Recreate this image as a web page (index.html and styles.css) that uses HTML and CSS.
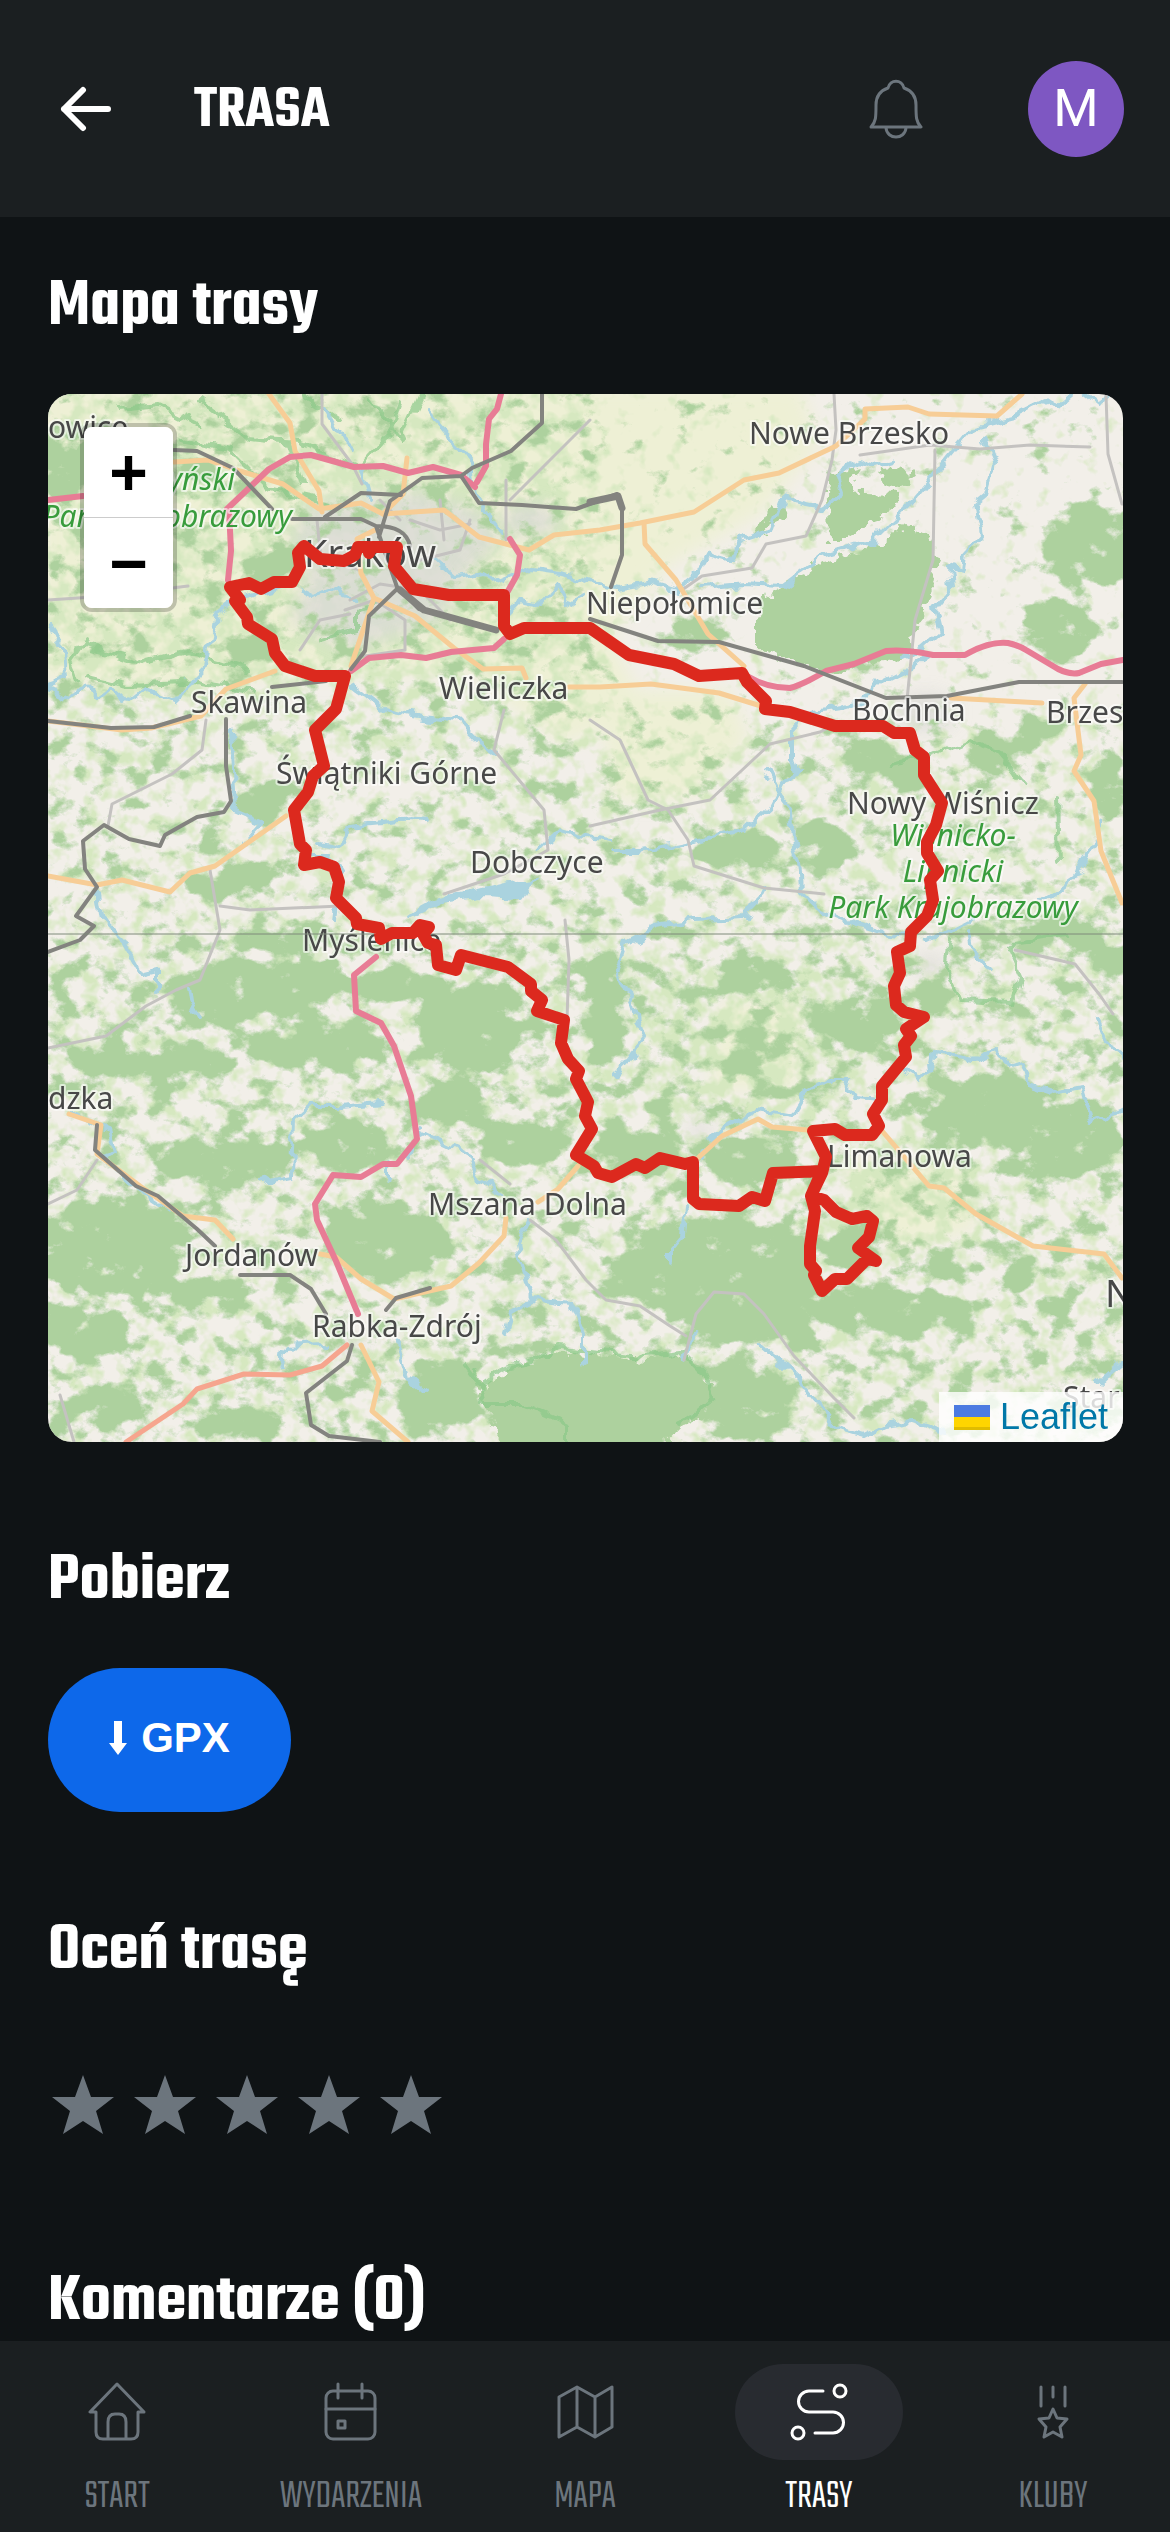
FILE: index.html
```html
<!DOCTYPE html>
<html lang="pl">
<head>
    <meta charset="UTF-8">
    <meta name="viewport" content="width=device-width, initial-scale=1">
    <title>Trasa</title>
    <link rel="stylesheet" href="styles.css">
</head>
<body>
    <header class="topbar">
        <a href="#" class="back" aria-label="Wstecz">
            <svg width="52" height="52" viewBox="0 0 52 52"><path d="M48 26H4M23 7L4 26l19 19"/></svg>
        </a>
        <h1>TRASA</h1>
        <button class="bell" aria-label="Powiadomienia">
            <svg width="54" height="60" viewBox="0 0 54 60"><path d="M2 48c5-5 5-10 5-22C7 16 13 11 19 9c2-9 14-9 16 0 6 2 12 7 12 17 0 12 0 17 5 22zM17 49c1 12 19 12 20 0"/></svg>
        </button>
        <button class="avatar">M</button>
    </header>

    <main>
        <section>
            <h2>Mapa trasy</h2>
            <div class="map">
                <svg class="tiles" viewBox="48 394 1075 1048" preserveAspectRatio="xMidYMid slice">
                    <defs>
                        <!-- density painted in alpha + noise, then thresholded -->
                        <filter id="forest" x="0" y="380" width="1180" height="1080" filterUnits="userSpaceOnUse" color-interpolation-filters="sRGB">
                            <feGaussianBlur in="SourceAlpha" stdDeviation="6" result="d"/>
                            <feTurbulence type="fractalNoise" baseFrequency="0.04 0.05" numOctaves="5" seed="7"/>
                            <feColorMatrix values="0 0 0 0 0  0 0 0 0 0  0 0 0 0 0  1 0 0 0 0" result="n"/>
                            <feComposite in="n" in2="d" operator="arithmetic" k2="1" k3="0.6"/>
                            <feComponentTransfer result="m"><feFuncA type="linear" slope="6" intercept="-4"/></feComponentTransfer>
                            <feFlood flood-color="#add19e"/>
                            <feComposite in2="m" operator="in"/>
                        </filter>
                        <filter id="scrub" x="0" y="380" width="1180" height="1080" filterUnits="userSpaceOnUse" color-interpolation-filters="sRGB">
                            <feGaussianBlur in="SourceAlpha" stdDeviation="20" result="d"/>
                            <feTurbulence type="fractalNoise" baseFrequency="0.06" numOctaves="3" seed="21"/>
                            <feColorMatrix values="0 0 0 0 0  0 0 0 0 0  0 0 0 0 0  1 0 0 0 0" result="n"/>
                            <feComposite in="n" in2="d" operator="arithmetic" k2="1" k3="0.4"/>
                            <feComponentTransfer result="m"><feFuncA type="linear" slope="4" intercept="-2.4"/></feComponentTransfer>
                            <feFlood flood-color="#d6e8c0"/>
                            <feComposite in2="m" operator="in"/>
                        </filter>
                        <filter id="soft" x="0" y="380" width="1180" height="1080" filterUnits="userSpaceOnUse"><feGaussianBlur stdDeviation="9"/></filter>
                        <filter id="rough" x="0" y="380" width="1180" height="1080" filterUnits="userSpaceOnUse">
                            <feTurbulence type="fractalNoise" baseFrequency="0.09" numOctaves="3" seed="3"/>
                            <feDisplacementMap in="SourceGraphic" scale="20" xChannelSelector="R" yChannelSelector="G"/>
                        </filter>
                        <filter id="wobble" x="0" y="380" width="1180" height="1080" filterUnits="userSpaceOnUse" color-interpolation-filters="sRGB">
                            <feTurbulence type="fractalNoise" baseFrequency="0.06" numOctaves="2" seed="11"/>
                            <feDisplacementMap in="SourceGraphic" scale="16" xChannelSelector="R" yChannelSelector="G"/>
                        </filter>
                    </defs>
                    <rect x="48" y="394" width="1075" height="1048" fill="#f2efe9"/>

                    <g class="farmland" filter="url(#soft)">
                        <path d="M40 385H800l20 60-60 70-90 50-60 70 40 80-90 30-90-70H300L190 690 40 680z"/>
                        <path d="M600 690h130l20 50-60 60h-80zM720 1000h80v90h-90zM840 1160h120l20 70-90 20z"/>
                    </g>
                    <g filter="url(#scrub)">
                        <rect x="40" y="385" width="560" height="330" opacity=".6"/>
                        <rect x="40" y="720" width="1085" height="725" opacity=".35"/>
                        <rect x="640" y="980" width="200" height="130" opacity=".6"/>
                        <rect x="820" y="1150" width="150" height="70" opacity=".6"/>
                    </g>
                    <g class="urban" filter="url(#soft)">
                        <path d="M310 505l110-14 60 20 20 30-30 30-30 50-90 30-60-30 20-50-20-30z"/>
                        <ellipse cx="530" cy="520" rx="30" ry="16"/>
                        <ellipse cx="925" cy="712" rx="30" ry="18"/>
                        <ellipse cx="930" cy="965" rx="16" ry="10"/>
                        <ellipse cx="700" cy="1130" rx="12" ry="8"/>
                        <ellipse cx="350" cy="1345" rx="14" ry="8"/>
                    </g>

                    <g filter="url(#forest)">
                        <rect x="40" y="385" width="560" height="330" opacity=".22"/>
                        <rect x="600" y="385" width="525" height="330" opacity=".04"/>
                        <rect x="40" y="715" width="1085" height="210" opacity=".2"/>
                        <rect x="40" y="925" width="1085" height="520" opacity=".27"/>
                        <g opacity=".85">
                            <ellipse cx="62" cy="465" rx="34" ry="28"/><ellipse cx="272" cy="564" rx="26" ry="20"/>
                            <ellipse cx="263" cy="800" rx="30" ry="20"/><ellipse cx="250" cy="650" rx="26" ry="12"/>
                            <ellipse cx="230" cy="880" rx="40" ry="16"/><ellipse cx="195" cy="470" rx="30" ry="10"/>
                            <ellipse cx="1095" cy="545" rx="52" ry="42"/><ellipse cx="1058" cy="630" rx="36" ry="32"/>
                            <ellipse cx="695" cy="633" rx="34" ry="14"/><ellipse cx="868" cy="755" rx="34" ry="14"/>
                            <ellipse cx="905" cy="778" rx="22" ry="18"/><ellipse cx="990" cy="750" rx="28" ry="14"/>
                            <ellipse cx="735" cy="850" rx="44" ry="18"/><ellipse cx="822" cy="845" rx="30" ry="24"/>
                            <ellipse cx="1030" cy="730" rx="20" ry="14"/><ellipse cx="1110" cy="790" rx="16" ry="30"/>
                            <ellipse cx="1050" cy="932" rx="64" ry="14"/><ellipse cx="1110" cy="958" rx="30" ry="14"/>
                            <ellipse cx="290" cy="938" rx="60" ry="11"/><ellipse cx="260" cy="985" rx="96" ry="22"/>
                            <ellipse cx="215" cy="1006" rx="42" ry="18"/><ellipse cx="395" cy="985" rx="46" ry="16"/>
                            <ellipse cx="470" cy="1030" rx="52" ry="46"/><ellipse cx="315" cy="1045" rx="68" ry="24"/>
                            <ellipse cx="150" cy="1062" rx="92" ry="13"/><ellipse cx="225" cy="1160" rx="64" ry="20"/>
                            <ellipse cx="345" cy="1145" rx="42" ry="24"/><ellipse cx="110" cy="1245" rx="78" ry="44"/>
                            <ellipse cx="390" cy="1240" rx="60" ry="38"/><ellipse cx="455" cy="1105" rx="38" ry="20"/>
                            <ellipse cx="525" cy="1145" rx="44" ry="20"/><ellipse cx="85" cy="1330" rx="44" ry="26"/>
                            <ellipse cx="105" cy="1407" rx="46" ry="14"/><ellipse cx="195" cy="1290" rx="40" ry="12"/>
                            <ellipse cx="705" cy="1265" rx="88" ry="46"/><ellipse cx="735" cy="1310" rx="66" ry="32"/>
                            <ellipse cx="745" cy="1160" rx="44" ry="22"/><ellipse cx="640" cy="1150" rx="42" ry="22"/>
                            <ellipse cx="858" cy="1025" rx="40" ry="26"/><ellipse cx="750" cy="1050" rx="24" ry="18"/>
                            <ellipse cx="925" cy="995" rx="28" ry="12"/><ellipse cx="603" cy="1010" rx="18" ry="64"/>
                            <ellipse cx="750" cy="975" rx="30" ry="18"/><ellipse cx="985" cy="1110" rx="64" ry="34"/>
                            <ellipse cx="1070" cy="1140" rx="52" ry="34"/><ellipse cx="852" cy="1250" rx="26" ry="22"/>
                            <ellipse cx="890" cy="1312" rx="76" ry="20"/><ellipse cx="797" cy="1290" rx="22" ry="62"/>
                            <ellipse cx="750" cy="1400" rx="42" ry="40"/><ellipse cx="1022" cy="1272" rx="14" ry="18"/>
                            <ellipse cx="947" cy="1267" rx="12" ry="10"/><ellipse cx="1062" cy="1305" rx="14" ry="10"/>
                            <ellipse cx="440" cy="1395" rx="40" ry="34"/><ellipse cx="240" cy="1420" rx="40" ry="14"/>
                        </g>
                    </g>
                    <g class="woods" filter="url(#rough)">
                        <path d="M764 597l29-18 21-14 29-8 36-10 21-20 28 7 10 22-9 43-16 38-5 20-34 5-29 10-36-4-53-21v-28z"/>
                        <path d="M828 492l72 2-5 14-50 34h-16zM825 474l30-4-6 22-20 2zM753 535l14-2 18-24-10-6z"/>
                        <ellipse cx="895" cy="476" rx="17" ry="9"/>
                        <path d="M470 1369l17 20 18-20 30-8 16-10 44 4 52 5 40-4 20 20 10 23-20 20-14 6-26 27H505l-18-42z"/>
                    </g>
                    <g class="park-edge" filter="url(#wobble)">
                        <path d="M464 1364l17 22 24-18 30-8 24-12 40 4 45 4 38-4 22 22 10 24-22 18-12 8"/>
                        <path d="M476 1370l6 34h40l44 20v18M890 765l30-5 34-14 14-6 30 12 28 34M1058 800l2 60M950 940l-4 30 14 30 52 2 8-26-14-32 60-8"/>
                        <path d="M84 645l28 8 30 10 44-12 60 18M80 680l-8-20 14-20M88 676l40 10 70-4 60 10M180 440l50 10 40 40 60 14M260 440l40 2 60 24 30-34 10-30M200 400l50 40 40 4 12 40M120 410l40-4 40 20M320 640l36-10 0-20 26-6M370 400l30 40 20-44M300 394l40 26"/>
                    </g>

                    <g class="water" filter="url(#wobble)">
                        <path d="M410 917q30-22 60-24 40-10 62-12l-10 16-40-2-40 6z" class="lake"/>
                        <path d="M48 625l16 24 2 30-18 6M48 688l20 10 16-12 12 12 14-10 16 14 18-14 30 12 30-30 8-30 4-24 26-20 40-10"/>
                        <path d="M300 589l12 6 20-6 20 8M436 560l18 16 30-4 20 10 28-12 32 4 26 8 30 6 30-6 26 8 22-18 10-18 22 6 12-20 30-10 10-30 40 8 20-14-6-20 20-14 20 6 14-4"/>
                        <path d="M701 588l42-4 40 2 40-30 50-16 40-40 22-26 24-30 16-18 40-10 32-16 12 8 20-18 20 16 16-26 16 4M500 620l20-20 20 4 16-20 10 20 16-10"/>
                        <path d="M985 440l10 24-8 30-12 10 6 32-16 18-2 16-14-4 2 22-16 20 6 24-20 18-16 8M928 655l-14 10-12 6-20 10-20 20-20 6-30 4-18 20v24l4 18-16 10-12 24-24 22-40 10-30 6-34 6-30 0"/>
                        <path d="M765 770l10 20 16 20 2 30 6 20 2 30 20 20 34 14 26 8 34 4M697 920l50-2 14-30M697 920l-40 6-30 16-10 30 16 34 10 34-16 22-12 12"/>
                        <path d="M353 685l30 24 40 8 36 4 16 16 20 16M318 843l20 4 12-22 60-6 18 2M310 856h20l10 16-6 50M231 730l4 80 28 12-20 22M98 895l4 24 20 20 20 36 16-4v20M190 988l2 14 8 16M540 850l20-20 20 6 30 4"/>
                        <path d="M380 1102l-40 4-30 0-16 14-2 56-30 6M419 1128l-12 30M389 1165v18M418 1132l50 24 12 24 24 14M530 1220l-12 24 8 40 6 16-22 12-6 20M532 1300l40 4 12 30v30"/>
                        <path d="M69 1114l40 16 6 24-14 4 40 34 30 20M400 1345l8 30 20 18M326 1344l-40 2-4 24M1042 900l30-20 20-30 10-30M970 920l-40 20M970 930l4 26 18 12"/>
                        <path d="M699 1157l20-26 40-22 34 6 14-24 20-10h18l10 16 26 2M904 1070l16 10 14-16 2-12 40 8 20-8 14 14 12-4 6 22 24 8 30-4 10 34 32-14M686 1205l-4 30-12 14v14"/>
                        <path d="M1098 1020l10 24 14 10M684 1360l12-26M760 1345l40 36 36 46 28 8 20-10 30-4 30 10M1098 1382l24-20M325 409l14 24 14 14M425 409l30 34 16 20 4 30 28 40M362 470l8 30"/>
                    </g>
                    <g class="minor">
                        <path d="M48 600l60-4 80-10M206 720l-4 30-30 24-60 30-4 22M220 906l30 4 90-4M210 870l10 60-20 50-24 10-30 16-40 30-58 12M322 394v30l30 40 10 20M590 420l-40 40-40 40"/>
                        <path d="M504 710l-10 40 50 60 4 40-44 24-60 20M834 394l2 36-4 30-10 40-16 36-40 8-14 24-50 8-20 14M935 450l-2 110-18 60-8 80M1106 394l2 60 14 50M860 455l70-10 50 4 50-4 60 2M590 826l70-16 50-10 60-56 50-12 16-8M590 720l30 20 28 60 20 10 20 30 6 26 70 22 60 6"/>
                        <path d="M565 920l4 40-2 60M350 600l30-16 40 6 30 30M420 560l40-10 10-30M1015 950l60 14 24 30 14 20M97 1160l-20 30-29 14M530 1220l26 20 30 40 20 20 34 6 30 20 16 10M684 1360l12-46 18-22 30 2 20 20 30 42 40 42 20 20M480 1160l30 24M60 1395l14 47"/>
                        <path d="M317 520l4 40 40 10M345 610l30-10 30 20v30l-40 6M300 650l20-30 30-6M410 520l30 10 30-6M440 500l4 40M380 500l20 20M506 480v60"/>
                    </g>
                    <g class="orange">
                        <path d="M269 394l21 29 5 28 24 40 3 21M174 462l34-2 32 11 43 13 36 25 42-6 22 11 61-4 35 27 50 13 25-15 46-5 40-7 54-11 50-32 35-7 57-27 29-27v-10l43-2 21 7 68 2 25-22"/>
                        <path d="M644 523l1 21 31 36 32 54 36 32M383 514l20-20 4-36M361 573l13 25 41 18 39 32 29 21 39-1 4 10M569 687h31l51-3 68 9 42 13M374 598l-23 68M361 573l-4-34 20-10"/>
                        <path d="M275 671l-49 18-25 27-50 12-29 2-74-9M48 876l49 9 25-5 48 12 20-19 25-7 71-50M951 698l91 5M1085 684l-11 14 7 57-7 16 20 30 7 50 21 52"/>
                        <path d="M69 1114l32 11-4 29 43 32 43 30 32 4 18 19M320 1254l16 3 25 22 33 20 57-13 28-23 25-27 2-18M538 1202l20-13 20-23M361 1345l18 37-7 29 36 31M699 1157l23-21 36-17 14 8 36 3M883 1132l46 54 15 2 32 26 57 32 71 8 18 24"/>
                    </g>
                    <path class="salmon" d="M347 1345l-25 21-32 9-46-1-47 15-14 15-57 38"/>
                    <g class="motorway">
                        <path d="M48 500l35-4M227 509l42-40 21-12 21-2 43 12 29-1 25 7 25-6 28 8 14 12M501 394l-4 15-8 10-3 25v22l-9 16M229 509l2 42-3 29M510 539l10 16-3 20-9 16M504 639l-10 9-43 4-25 6-25-3-32 3-18 13"/>
                        <path d="M747 676q20 12 43 12 14-4 36-17l28-7 32-13q20-2 47 4h32q24-14 43-12 10 2 18 7l32 19q12 6 21 4l22-9 22-4M376 957l-22 18 2 36 25 12 13 23 17 50 6 43-20 25h-14l-22 13-28-2-18 29 2 16 19 41 22 53"/>
                    </g>
                    <g class="rail">
                        <path d="M174 450l23 1 36 17 39 41M292 519h69l15 7 21 61 22 22 78 21M542 394v29l-31 28-39 17-11 8-39 2-32 23-11 36M325 517l36-24 40 2M461 476l18 27 43 2 54 4 41-15 5 11v50l-11 32M376 526q30 0 34 20"/>
                        <path d="M590 619l68 22 61 1 85 24 82 32 61-2 72-14h103M397 589l-28 27-4 35-14 18M272 687l54-6M48 721l63 7 43-1 36-11M226 719v47l5 35-7 11-27 5-32 18-5 11-31-7-25-14-21 16 2 28 12 18-21 29 18 10-14 14-32 12"/>
                        <path d="M97 1125l-2 25 41 36 22 10 39 33 18 17M240 1275h50l21 14 15 25M386 1310l10-12 34-10M352 1345l-5 16-41 32 5 32 18 11 51 6"/>
                        <path class="yard" d="M400 590l24 20 72 20M590 502l28-6 4 12"/>
                    </g>

                    <g class="labels">
                        <text x="48" y="438">owice</text>
                        <text x="749" y="444">Nowe Brzesko</text>
                        <text x="586" y="614">Niepołomice</text>
                        <text x="439" y="699">Wieliczka</text>
                        <text x="191" y="713">Skawina</text>
                        <text x="276" y="784">Świątniki Górne</text>
                        <text x="470" y="873">Dobczyce</text>
                        <text x="852" y="721">Bochnia</text>
                        <text x="1046" y="723">Brzes</text>
                        <text x="847" y="814">Nowy Wiśnicz</text>
                        <text x="302" y="951">Myślenice</text>
                        <text x="48" y="1109">dzka</text>
                        <text x="428" y="1215">Mszana Dolna</text>
                        <text x="827" y="1167">Limanowa</text>
                        <text x="185" y="1266">Jordanów</text>
                        <text x="312" y="1337">Rabka-Zdrój</text>
                        <text x="1063" y="1408">Star</text>
                        <text x="304" y="567" class="city">Kraków</text>
                        <text x="1105" y="1307" class="city">N</text>
                        <text x="235" y="490" class="park" text-anchor="end">Tenczyński</text>
                        <text x="292" y="527" class="park" text-anchor="end">Park Krajobrazowy</text>
                        <text x="953" y="846" class="park" text-anchor="middle">Wiśnicko-</text>
                        <text x="953" y="882" class="park" text-anchor="middle">Lipnicki</text>
                        <text x="953" y="918" class="park" text-anchor="middle">Park Krajobrazowy</text>
                    </g>
                    <path class="seam" d="M48 934h1075"/>

                    <path class="route" d="M397 547L394 566 413 589 449 595H504V626L510 634 524 628H590L629 655 674 664 699 676 742 673 747 682 766 701 765 709 790 712 835 726H883L894 733H910L915 750 924 757V775L942 803 936 825 927 842V853L938 871 930 880 933 900 927 916 911 932 910 946 897 952 900 973 894 986 896 1005 904 1012 924 1017 906 1029 911 1036 904 1045 906 1057 882 1086V1100L873 1114 879 1126 872 1135H845L835 1129 813 1131 826 1157 822 1173 811 1196 824 1200 836 1212 852 1219 867 1216 873 1221 869 1237 858 1248 876 1261 867 1259 847 1279H835L822 1291 814 1275 816 1271 810 1264V1246L815 1211 811 1196 822 1171 773 1173 765 1201 752 1197 739 1206 699 1204 693 1199V1162L685 1164 660 1158 645 1168 636 1164 612 1177 598 1173 594 1166 576 1155 592 1129 585 1116 588 1102 576 1079 579 1071 568 1059 561 1043 564 1020 537 1011 542 1000 531 991V984L508 967 461 955 456 970 438 965 436 945 428 943 423 934 429 927 420 925 413 933H392L381 939 379 928 357 924 356 918 336 898 339 882 334 867 320 862 304 865 306 850 300 844 294 810 308 792 313 776 324 766 315 730 336 709 345 676H315L285 666 275 653 272 639 248 624 247 617 235 601 240 600 230 587 249 583 261 589 274 582H292L300 567 298 553 304 546 320 559 344 561 355 555 358 547H368L369 553 372 547Z"/>
                </svg>
                <div class="zoom">
                    <button aria-label="Przybliż">+</button>
                    <button aria-label="Oddal">−</button>
                </div>
                <div class="attribution">
                    <svg width="36" height="25" viewBox="0 0 36 25"><path fill="#4c7be1" d="M0 0h36v12H0z"/><path fill="#ffd500" d="M0 12h36v10H0z"/><path fill="#e0bc00" d="M0 22h36v3H0z"/></svg>
                    <a href="#">Leaflet</a>
                </div>
            </div>
        </section>

        <section>
            <h2>Pobierz</h2>
            <button class="gpx">
                <svg width="18" height="34" viewBox="0 0 18 34"><path d="M5 0h8v22h5L9 34 0 22h5z"/></svg>
                GPX
            </button>
        </section>

        <section>
            <h2>Oceń trasę</h2>
            <div class="rating">
                <button aria-label="1"><svg viewBox="0 0 66 66"><path d="M33 3l8 22h23L46 39l7 23-20-13-20 13 7-23L2 25h23z"/></svg></button>
                <button aria-label="2"><svg viewBox="0 0 66 66"><path d="M33 3l8 22h23L46 39l7 23-20-13-20 13 7-23L2 25h23z"/></svg></button>
                <button aria-label="3"><svg viewBox="0 0 66 66"><path d="M33 3l8 22h23L46 39l7 23-20-13-20 13 7-23L2 25h23z"/></svg></button>
                <button aria-label="4"><svg viewBox="0 0 66 66"><path d="M33 3l8 22h23L46 39l7 23-20-13-20 13 7-23L2 25h23z"/></svg></button>
                <button aria-label="5"><svg viewBox="0 0 66 66"><path d="M33 3l8 22h23L46 39l7 23-20-13-20 13 7-23L2 25h23z"/></svg></button>
            </div>
        </section>

        <section>
            <h2>Komentarze (0)</h2>
        </section>
    </main>

    <nav class="tabs">
        <a href="#">
            <span class="icon"><svg viewBox="0 0 60 60"><path d="M30 2L3 30h6v20q0 7 7 7h28q7 0 7-7V30h6zM21 57V40q0-8 7-8h4q7 0 7 8v17"/></svg></span>
            START
        </a>
        <a href="#">
            <span class="icon"><svg viewBox="0 0 60 60"><rect x="5" y="9" width="49" height="48" rx="7"/><path d="M5 27h49M17 2v14M41 2v14"/><rect x="17" y="39" width="7" height="7"/></svg></span>
            WYDARZENIA
        </a>
        <a href="#">
            <span class="icon"><svg viewBox="0 0 60 60"><path d="M4 15L22 5l18 10L57 5v40L40 55 22 45 4 55zM22 5v40M40 15v40"/></svg></span>
            MAPA
        </a>
        <a href="#" class="active">
            <span class="icon"><svg viewBox="0 0 60 60"><circle cx="51" cy="9" r="6"/><circle cx="9" cy="51" r="6"/><path d="M34 9H20a10 10 0 0 0 0 21h24a10 10 0 0 1 0 21H26"/></svg></span>
            TRASY
        </a>
        <a href="#">
            <span class="icon"><svg viewBox="0 0 60 60"><path d="M18 5v19M30 5v10M42 5v19M30 27l4 9 10 1-7 8 2 10-9-5-9 5 2-10-7-8 10-1z"/></svg></span>
            KLUBY
        </a>
    </nav>
</body>
</html>
```
FILE: styles.css
```css
* {
    box-sizing: border-box;
}
body {
    display: flex;
    flex-direction: column;
    min-height: 100vh;
    margin: 0;
    background-color: #0f1315;
    color: #fff;
    font-family: Teko, "Roboto Condensed", Roboto, sans-serif;
}
h1, h2 {
    margin: 0;
    font-weight: 600;
}
button {
    padding: 0;
    border: none;
    background: none;
    color: inherit;
    cursor: pointer;
}
a {
    text-decoration: none;
}
svg {
    display: block;
}
.topbar {
    display: flex;
    align-items: center;
    height: 217px;
    padding: 0 46px 0 60px;
    background-color: #1b1f21;
}
.topbar h1 {
    margin-left: 82px;
    padding-top: 7px;
    font-size: 60px;
    line-height: 72px;
}
.back svg {
    fill: none;
    stroke: #fff;
    stroke-width: 6;
    stroke-linecap: round;
    stroke-linejoin: round;
}
.bell {
    margin-left: auto;
    margin-right: 105px;
}
.bell svg {
    fill: none;
    stroke: #6c757d;
    stroke-width: 3;
    stroke-linejoin: round;
}
.avatar {
    width: 96px;
    height: 96px;
    border-radius: 50%;
    background-color: #7e57c2;
    font-family: Roboto, sans-serif;
    font-size: 52px;
}
main {
    flex: 1;
    display: flex;
    flex-direction: column;
    gap: 104px;
    padding: 55px 47px 2px 48px;
}
h2 {
    margin-bottom: 50px;
    font-size: 69px;
    line-height: 72px;
}
section:last-child h2 {
    margin-bottom: 0;
}

/* map */
.map {
    position: relative;
    height: 1048px;
    border-radius: 24px;
    overflow: hidden;
}
.tiles {
    width: 100%;
    height: 100%;
}
.farmland {
    fill: #eef0d5;
}
.urban {
    fill: #dadad6;
    opacity: 0.8;
}
.woods {
    fill: #add19e;
}
.park-edge, .water, .minor, .orange, .salmon, .motorway, .rail, .route, .seam {
    fill: none;
    stroke-linejoin: round;
    stroke-linecap: round;
}
.park-edge {
    stroke: #8cc98a;
    stroke-width: 4;
    opacity: 0.7;
}
.water {
    stroke: #aad3df;
    stroke-width: 4;
}
.water .lake {
    fill: #aad3df;
}
.minor {
    stroke: #c4c2c0;
    stroke-width: 3;
}
.orange {
    stroke: #f7cd96;
    stroke-width: 5;
}
.salmon {
    stroke: #f6a58e;
    stroke-width: 5;
}
.motorway {
    stroke: #e87c95;
    stroke-width: 6;
}
.rail {
    stroke: #83837f;
    stroke-width: 4;
}
.rail .yard {
    stroke-width: 7;
}
.labels {
    font-family: "Noto Sans", sans-serif;
    font-size: 30px;
    fill: #484848;
    stroke: rgba(255, 255, 255, 0.6);
    stroke-width: 4;
    stroke-linejoin: round;
    paint-order: stroke;
}
.labels .city {
    font-size: 38px;
}
.labels .park {
    font-style: italic;
    fill: #389c3c;
}
.seam {
    stroke: #7f8a7a;
    stroke-width: 1;
}
.route {
    stroke: #dc291e;
    stroke-width: 12;
}
.zoom {
    position: absolute;
    top: 29px;
    left: 32px;
    border: 4px solid rgba(0, 0, 0, 0.2);
    border-radius: 12px;
    background-clip: padding-box;
}
.zoom button {
    display: block;
    width: 89px;
    height: 90px;
    background-color: #fff;
    color: #000;
    font: bold 66px/90px "Liberation Sans", sans-serif;
}
.zoom button:first-child {
    height: 91px;
    border-bottom: 1px solid #ccc;
    border-radius: 8px 8px 0 0;
}
.zoom button:last-child {
    border-radius: 0 0 8px 8px;
}
.attribution {
    position: absolute;
    right: 0;
    bottom: 0;
    display: flex;
    align-items: center;
    gap: 10px;
    height: 50px;
    padding: 0 15px;
    background: rgba(255, 255, 255, 0.8);
    font: 36px "Liberation Sans", sans-serif;
}
.attribution a {
    color: #0078a8;
}

.gpx {
    display: flex;
    align-items: center;
    justify-content: center;
    gap: 14px;
    width: 243px;
    height: 144px;
    padding-bottom: 4px;
    border-radius: 72px;
    background-color: #0d68ea;
    font: bold 42px "Liberation Sans", Arial, sans-serif;
}
.gpx svg {
    fill: #fff;
}
.rating {
    display: flex;
    align-items: center;
    gap: 12px;
    height: 125px;
    padding-top: 8px;
}
.rating button {
    display: flex;
    justify-content: center;
    width: 70px;
}
.rating svg {
    width: 66px;
    height: 66px;
    fill: #6c757d;
}

/* bottom navigation */
.tabs {
    position: sticky;
    bottom: 0;
    display: grid;
    grid-template-columns: repeat(5, 1fr);
    height: 191px;
    padding-top: 23px;
    background-color: #1b1f21;
}
.tabs a {
    display: flex;
    flex-direction: column;
    align-items: center;
    gap: 19px;
    color: #6c757d;
    font-size: 41px;
    font-weight: 300;
    line-height: 36px;
}
.tabs .icon {
    display: flex;
    align-items: center;
    justify-content: center;
    width: 168px;
    height: 96px;
    border-radius: 48px;
}
.tabs svg {
    width: 60px;
    height: 60px;
    fill: none;
    stroke: currentColor;
    stroke-width: 3;
    stroke-linecap: round;
    stroke-linejoin: round;
}
.tabs .active {
    color: #fff;
}
.tabs .active .icon {
    background-color: #282b30;
}
```
